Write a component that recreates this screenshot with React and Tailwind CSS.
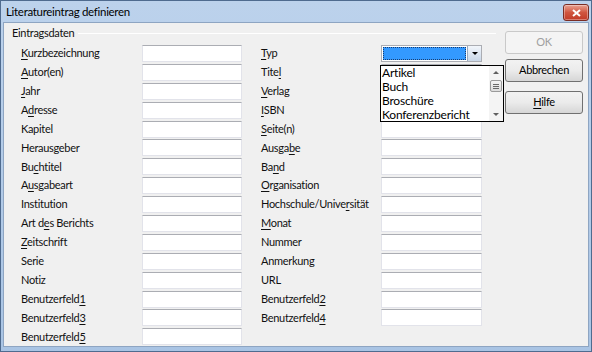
import React from "react";

const rows = [
  [["Kurzbezeichnung", 0], ["Typ", 0]],
  [["Autor(en)", 0], ["Titel", 4]],
  [["Jahr", 0], ["Verlag", 0]],
  [["Adresse", 1], ["ISBN", 0]],
  [["Kapitel", null], ["Seite(n)", 0]],
  [["Herausgeber", null], ["Ausgabe", 5]],
  [["Buchtitel", 2], ["Band", 2]],
  [["Ausgabeart", 1], ["Organisation", 0]],
  [["Institution", null], ["Hochschule/Universität", 16]],
  [["Art des Berichts", 5], ["Monat", 0]],
  [["Zeitschrift", 0], ["Nummer", null]],
  [["Serie", null], ["Anmerkung", null]],
  [["Notiz", null], ["URL", null]],
  [["Benutzerfeld1", 12], ["Benutzerfeld2", 12]],
  [["Benutzerfeld3", 12], ["Benutzerfeld4", 12]],
  [["Benutzerfeld5", 12], null],
];

function Mnemonic({ text, u }) {
  if (u == null) return <span>{text}</span>;
  return (
    <span>
      {text.slice(0, u)}
      <span className="underline underline-offset-[2px]">{text[u]}</span>
      {text.slice(u + 1)}
    </span>
  );
}

function Field({ wide }) {
  return (
    <div
      className={`h-[17px] border border-[#e2e3ea] border-t-[#abadb3] bg-white ${wide ? "w-[101px]" : "w-[100px]"}`}
    />
  );
}

function TypeCombo() {
  return (
    <div className="relative h-[17px] w-[101px] border border-[#abadb3] bg-white">
      <div className="flex h-full">
        <div className="m-[1px] flex-1 border border-dotted border-[#1a3d70] bg-[#3399ff]" />
        <div className="flex w-[14px] items-center justify-center border-l border-[#9aa9bd] bg-gradient-to-b from-[#f2f6fb] to-[#c9d7e8]">
          <div className="h-0 w-0 border-x-[3px] border-t-[3px] border-x-transparent border-t-black" />
        </div>
      </div>
      <div className="absolute left-[-2px] top-[19px] z-10 flex h-[57px] w-[124px] border border-black bg-white">
        <div className="flex-1 pl-[1px] text-[12px] leading-[14px] tracking-[-0.2px] text-black">
          <div>Artikel</div>
          <div>Buch</div>
          <div>Broschüre</div>
          <div>Konferenzbericht</div>
        </div>
        <div className="flex w-[14px] flex-col items-center bg-[#f4f4f4]">
          <div className="flex h-[13px] items-center">
            <div className="h-0 w-0 border-x-[3px] border-b-[3px] border-x-transparent border-b-[#606060]" />
          </div>
          <div className="mt-[1px] flex h-[12px] w-[12px] flex-col items-center justify-center gap-[1px] rounded-[2px] border border-[#9a9a9a] bg-gradient-to-b from-[#f4f4f4] to-[#dcdcdc]">
            <div className="h-px w-[6px] bg-[#6a6a6a]" />
            <div className="h-px w-[6px] bg-[#6a6a6a]" />
            <div className="h-px w-[6px] bg-[#6a6a6a]" />
          </div>
          <div className="flex-1" />
          <div className="flex h-[13px] items-center">
            <div className="h-0 w-0 border-x-[3px] border-t-[3px] border-x-transparent border-t-[#606060]" />
          </div>
        </div>
      </div>
    </div>
  );
}

function Button({ children, disabled, className }) {
  return (
    <div
      className={`flex h-[23px] w-[78px] items-center justify-center rounded-[3px] border ${
        disabled
          ? "border-[#c9c9c9] bg-[#f4f4f4] text-[#a0a0a0]"
          : "border-[#707070] bg-gradient-to-b from-[#f2f2f2] via-[#ebebeb] to-[#d6d6d6] text-black"
      } ${className}`}
    >
      {children}
    </div>
  );
}

export default function App() {
  return (
    <div className="flex h-[352px] w-[592px] flex-col overflow-hidden border border-[#4f6b8f] bg-gradient-to-b from-[#bcd2ec] to-[#a9c4e4] font-['Lato',sans-serif] text-[11px] tracking-[-0.3px] text-[#111]">
      <div className="flex h-[21px] shrink-0 items-center justify-between pl-[5px] pr-[2px]">
        <span className="text-[11.5px] text-black">Literatureintrag definieren</span>
        <div className="mt-[2px] flex h-[17px] w-[26px] items-center justify-center rounded-[3px] border border-[#7a2d24] bg-gradient-to-b from-[#e8a192] via-[#d0553f] to-[#c23a26] shadow-[inset_0_0_0_1px_rgba(255,255,255,0.35)]">
          <svg width="9" height="8" viewBox="0 0 9 8">
            <path d="M1 1 L8 7 M8 1 L1 7" stroke="white" strokeWidth="2" />
          </svg>
        </div>
      </div>
      <div className="mx-[2px] mb-[4px] flex flex-1 overflow-hidden border border-[#8ea5c2] bg-[#f0f0f0]">
        <div className="w-[492px] pl-[8px] pt-[3px]">
          <div className="flex h-[14px] items-center gap-[4px]">
            <span>Eintragsdaten</span>
            <div className="h-px flex-1 border-b border-white bg-[#d5dfe5]" />
          </div>
          <div className="ml-[9px] mt-[5px] grid auto-rows-[18.9px] grid-cols-[121px_100px_19px_120px_101px]">
            {rows.map((row, i) => (
              <React.Fragment key={i}>
                <div className="flex h-[17px] items-center">
                  <Mnemonic text={row[0][0]} u={row[0][1]} />
                </div>
                <Field />
                <div />
                {row[1] ? (
                  <>
                    <div className="flex h-[17px] items-center">
                      <Mnemonic text={row[1][0]} u={row[1][1]} />
                    </div>
                    {i === 0 ? <TypeCombo /> : <Field wide />}
                  </>
                ) : (
                  <>
                    <div />
                    <div />
                  </>
                )}
              </React.Fragment>
            ))}
          </div>
        </div>
        <div className="flex flex-col pl-[9px] pt-[8px]">
          <Button disabled>OK</Button>
          <Button className="mt-[5px]">Abbrechen</Button>
          <Button className="mt-[9px]">
            <Mnemonic text="Hilfe" u={0} />
          </Button>
        </div>
      </div>
    </div>
  );
}
